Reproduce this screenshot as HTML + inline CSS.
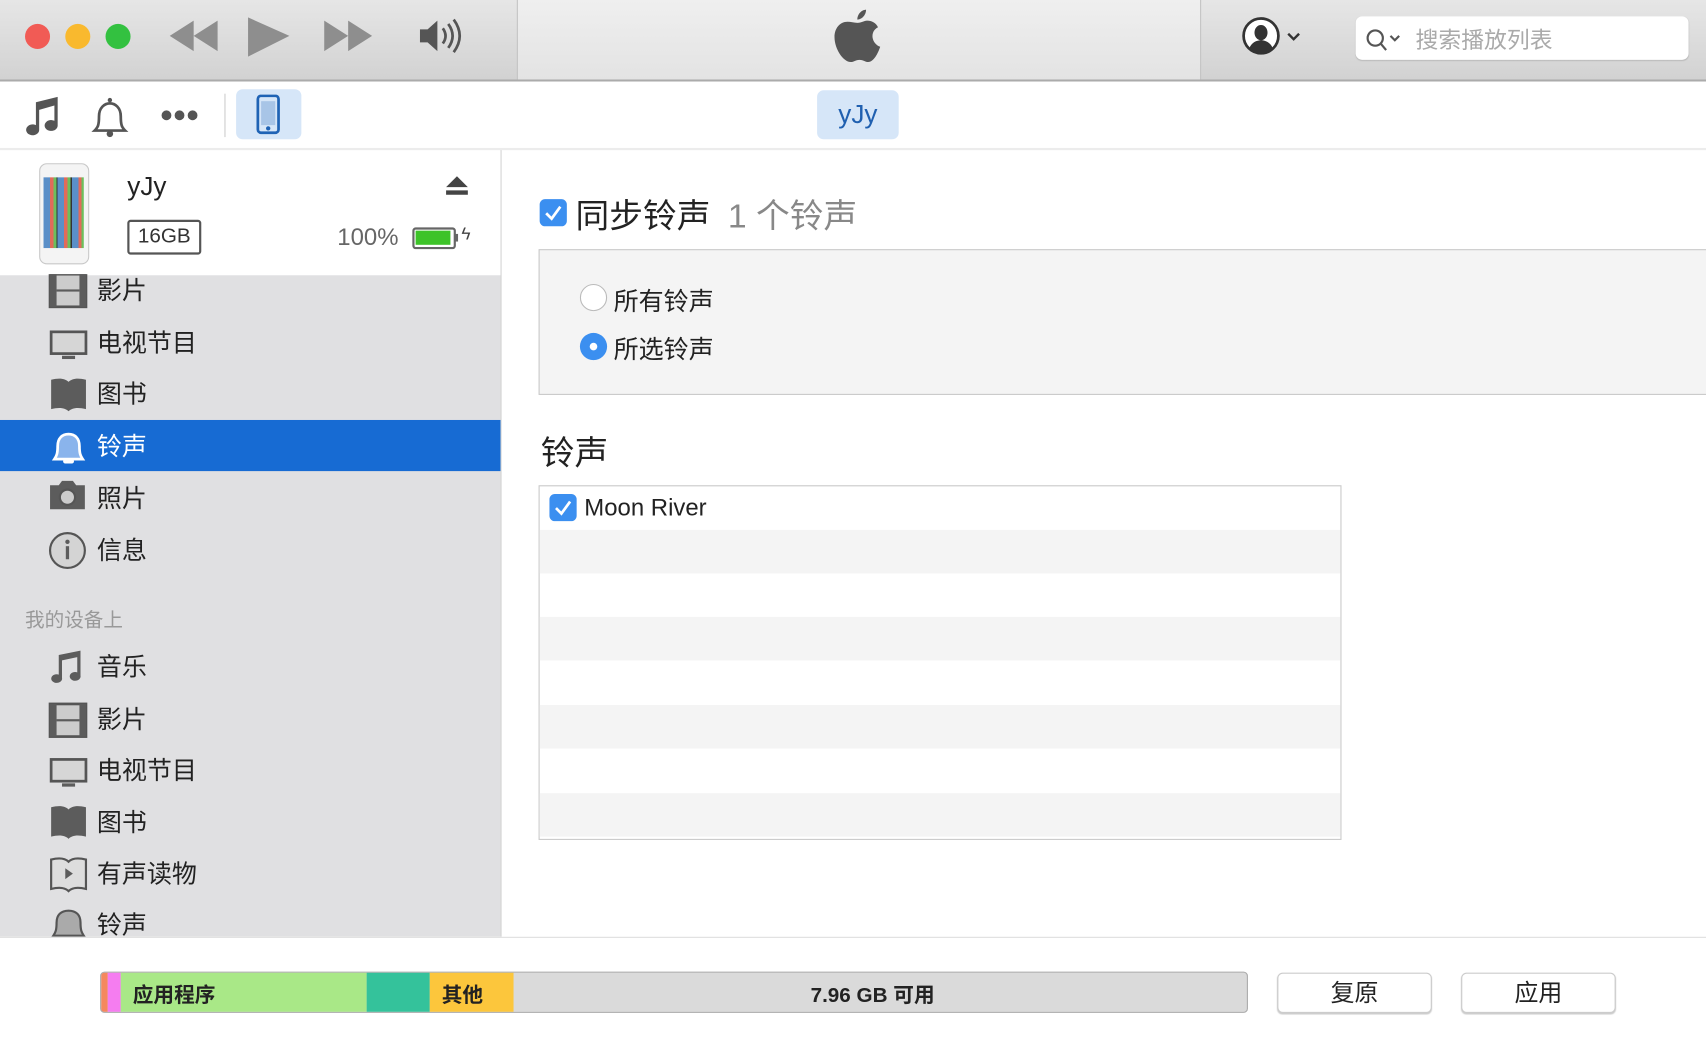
<!DOCTYPE html>
<html><head><meta charset="utf-8"><style>
html,body{margin:0;padding:0;width:1706px;height:1042px;overflow:hidden;background:#fff}
#w{position:absolute;left:0;top:0;width:1568px;height:958px;transform:scale(1.08801);transform-origin:0 0;font-family:"Liberation Sans","Noto Sans CJK SC",sans-serif;color:#222}
.a{position:absolute}
.si{position:absolute;left:89px;font-size:23px;color:#222;line-height:24px}
.row{position:absolute;left:496px;width:736px;height:40px}
</style></head><body><div id="w">
<!-- title bar -->
<div class="a" style="left:0;top:0;width:1568px;height:73px;background:linear-gradient(#e6e6e6,#d2d2d2);border-bottom:2px solid #ababab"></div>
<div class="a" style="left:475px;top:0;width:627px;height:73px;background:linear-gradient(#efefef,#e3e3e3);border-left:1px solid #c4c4c4;border-right:1px solid #c4c4c4"></div>
<div class="a" style="left:23px;top:22px;width:23px;height:23px;border-radius:50%;background:#f15b55"></div>
<div class="a" style="left:60px;top:22px;width:23px;height:23px;border-radius:50%;background:#f9b92e"></div>
<div class="a" style="left:97px;top:22px;width:23px;height:23px;border-radius:50%;background:#33c140"></div>
<svg class="a" style="left:150px;top:14px" width="290" height="44"><g fill="#8e8e8e">
<path d="M6 19 L28 5 V33Z M28 19 L50 5 V33Z"/><path d="M78 2 L116 19 L78 38Z"/><path d="M148 5 L170 19 L148 33Z M170 5 L192 19 L170 33Z"/></g>
<g fill="#555"><path d="M236 13h7l9-8v28l-9-8h-7z"/></g><g fill="none" stroke="#555" stroke-width="2.5"><path d="M257 12q5 7 0 14M262 8q8 11 0 22M267 4q11 15 0 30"/></g></svg>
<svg class="a" style="left:763px;top:6px" width="50" height="58"><path fill="#555" d="M33 3c0 5-4 9-8 9 0-5 4-9 8-9zM25 15c4 0 6-2 9-2 4 0 8 2 10 6-8 4-6 15 2 18-2 6-6 14-11 14-3 0-4-2-8-2s-5 2-8 2C12 51 4 39 4 28 4 20 9 14 16 14c3 0 6 1 9 1z"/></svg>
<svg class="a" style="left:1140px;top:14px" width="60" height="40"><circle cx="19" cy="19" r="16" fill="#fff" stroke="#333" stroke-width="2.5"/><path fill="#333" d="M19 9a6 7 0 1 1 0 14a6 7 0 1 1 0-14zM8 31c2-6 7-8 11-8s9 2 11 8a16 16 0 0 1-22 0z"/><path d="M44 17l5 5 5-5" fill="none" stroke="#333" stroke-width="2.2"/></svg>
<div class="a" style="left:1246px;top:15px;width:306px;height:40px;background:#fff;border-radius:6px;box-shadow:0 1px 1px #bbb"></div>
<svg class="a" style="left:1254px;top:24px" width="40" height="24"><circle cx="10" cy="11" r="7" fill="none" stroke="#555" stroke-width="2"/><path d="M15 16l5 6M24 9l4 4 4-4" stroke="#555" stroke-width="2" fill="none"/></svg>
<div class="a" style="left:1301px;top:21px;font-size:21px;color:#aaa">搜索播放列表</div>
<!-- toolbar -->
<div class="a" style="left:0;top:75px;width:1568px;height:61px;background:#fff;border-bottom:2px solid #ececec"></div>
<svg class="a" style="left:20px;top:86px" width="260" height="44"><path fill="#555" d="M13 8l20-5v26a6 5 0 1 1-3-4V11l-14 4v18a6 5 0 1 1-3-4z"/>
<path d="M67 34c3-3 4-5 4-13 0-8 5-12 10-12s10 4 10 12c0 8 1 10 4 13z" fill="#fff" stroke="#555" stroke-width="2.5"/><circle cx="81" cy="37" r="3" fill="#555"/><circle cx="81" cy="6" r="2" fill="#555"/>
<circle cx="133" cy="20" r="4.5" fill="#555"/><circle cx="145" cy="20" r="4.5" fill="#555"/><circle cx="157" cy="20" r="4.5" fill="#555"/>
<rect x="186" y="0" width="1.5" height="40" fill="#ddd"/></svg>
<div class="a" style="left:217px;top:82px;width:60px;height:46px;background:#d6e6f8;border-radius:6px"></div>
<svg class="a" style="left:235px;top:87px" width="24" height="38"><rect x="2" y="1" width="19" height="34" rx="3" fill="none" stroke="#1f63b5" stroke-width="2.5"/><rect x="5" y="6" width="13" height="22" fill="#1f63b5" opacity=".25"/><circle cx="11.5" cy="31" r="2" fill="#1f63b5"/></svg>
<div class="a" style="left:751px;top:83px;width:75px;height:45px;background:#d6e6f8;border-radius:6px;color:#2060b0;font-size:24px;text-align:center;line-height:45px">yJy</div>
<!-- sidebar -->
<div class="a" style="left:0;top:138px;width:460px;height:723px;background:#e0e0e2;border-right:1px solid #d4d4d4"></div>
<div class="a" style="left:0;top:138px;width:460px;height:115px;background:#fff"></div>
<div class="a" style="left:36px;top:150px;width:44px;height:91px;border:1px solid #c8c8c8;border-radius:7px;background:#f4f4f4"></div>
<div class="a" style="left:40px;top:163px;width:37px;height:65px;background:repeating-linear-gradient(90deg,#5a8fc8 0 6px,#e26a5a 6px 9px,#6cbf5d 9px 12px,#333 12px 13px)"></div>
<div class="a" style="left:117px;top:158px;font-size:24px">yJy</div>
<div class="a" style="left:117px;top:202px;width:64px;height:28px;border:2px solid #555;border-radius:3px;font-size:19px;text-align:center;line-height:28px;color:#333">16GB</div>
<svg class="a" style="left:409px;top:160px" width="24" height="22"><path d="M1 12L11 2l10 10z M1 15h20v4H1z" fill="#444"/></svg>
<div class="a" style="left:310px;top:205px;font-size:22px;color:#666">100%</div>
<div class="a" style="left:379px;top:209px;width:36px;height:16px;border:2px solid #666;border-radius:3px;background:#fff"><div style="margin:1px;width:32px;height:13px;background:#3dc328"></div></div>
<div class="a" style="left:418px;top:215px;width:3px;height:7px;background:#666"></div>
<div class="a" style="left:424px;top:207px;font-size:16px;color:#444">ϟ</div>

<div class="a" style="left:0;top:386px;width:460px;height:47px;background:#176bd3"></div>
<svg class="a" style="left:44px;top:252px" width="40" height="610" fill="#5c5c5c">
<g transform="translate(2,0)"><rect x="0" y="0" width="33" height="30" fill="#ccc" stroke="#555" stroke-width="2.5"/><path d="M0 0h6v30H0zM27 0h6v30h-6z"/><rect x="6" y="14" width="21" height="2"/></g>
<g transform="translate(2,52)"><rect x="1" y="1" width="32" height="20" fill="#d6d6d6" stroke="#555" stroke-width="2.5"/><rect x="11" y="23" width="12" height="3"/></g>
<path d="M3 97c8-2 13-1 16 2 3-3 8-4 16-2v27c-8-2-13-1-16 2-3-3-8-4-16-2z"/>
<path d="M6 170c2-3 3-5 3-12 0-7 4-11 10-11s10 4 10 11c0 7 1 9 3 12z" fill="#8ab4ec" stroke="#fff" stroke-width="2.5"/><rect x="14" y="170" width="10" height="4" rx="2" fill="#fff"/>
<path d="M2 194h8l3-4h10l3 4h8v22H2z"/><circle cx="18" cy="205" r="7" fill="#ccc" stroke="#555" stroke-width="2"/>
<circle cx="18" cy="254" r="16" fill="#d4d4d4" stroke="#555" stroke-width="2"/><rect x="16.5" y="250" width="3" height="12"/><circle cx="18" cy="246" r="2"/>
<path d="M10 350l20-4v23a5 4 0 1 1-3-3v-14l-14 3v16a5 4 0 1 1-3-3z"/>
<g transform="translate(2,395)"><rect x="0" y="0" width="33" height="30" fill="#ccc" stroke="#555" stroke-width="2.5"/><path d="M0 0h6v30H0zM27 0h6v30h-6z"/><rect x="6" y="14" width="21" height="2"/></g>
<g transform="translate(2,445)"><rect x="1" y="1" width="32" height="20" fill="#d6d6d6" stroke="#555" stroke-width="2.5"/><rect x="11" y="23" width="12" height="3"/></g>
<path d="M3 490c8-2 13-1 16 2 3-3 8-4 16-2v27c-8-2-13-1-16 2-3-3-8-4-16-2z"/>
<path d="M3 538c8-2 13-1 16 2 3-3 8-4 16-2v27c-8-2-13-1-16 2-3-3-8-4-16-2z" fill="#ddd" stroke="#555" stroke-width="2"/><path d="M16 546l7 5-7 5z"/>
<path d="M5 608c2-3 3-5 3-12 0-7 4-11 11-11s11 4 11 11c0 7 1 9 3 12z" fill="#aaa" stroke="#555" stroke-width="2"/>
</svg>
<div class="si" style="top:255px">影片</div>
<div class="si" style="top:303px">电视节目</div>
<div class="si" style="top:350px">图书</div>
<div class="si" style="top:398px;color:#fff">铃声</div>
<div class="si" style="top:446px">照片</div>
<div class="si" style="top:494px">信息</div>
<div class="a" style="left:23px;top:556px;font-size:18px;color:#999">我的设备上</div>
<div class="si" style="top:601px">音乐</div>
<div class="si" style="top:649px">影片</div>
<div class="si" style="top:696px">电视节目</div>
<div class="si" style="top:744px">图书</div>
<div class="si" style="top:791px">有声读物</div>
<div class="si" style="top:838px">铃声</div>
<!-- content -->
<div class="a" style="left:496px;top:183px;width:25px;height:25px;background:#3b8ff0;border-radius:5px"></div>
<svg class="a" style="left:496px;top:183px" width="25" height="25"><path d="M6 13l5 5 8-11" stroke="#fff" stroke-width="2.5" fill="none"/></svg>
<div class="a" style="left:529px;top:173px;font-size:31px;color:#222">同步铃声<span style="color:#888;margin-left:16px">1 个铃声</span></div>
<div class="a" style="left:495px;top:229px;width:1080px;height:132px;background:#f4f4f4;border:1px solid #c9c9c9"></div>
<div class="a" style="left:533px;top:261px;width:23px;height:23px;border:1px solid #bbb;border-radius:50%;background:#fff"></div>
<div class="a" style="left:533px;top:306px;width:25px;height:25px;border-radius:50%;background:#3b8ff0"><div style="margin:9px;width:7px;height:7px;border-radius:50%;background:#fff"></div></div>
<div class="a" style="left:564px;top:258px;font-size:23px">所有铃声</div>
<div class="a" style="left:564px;top:302px;font-size:23px">所选铃声</div>
<div class="a" style="left:497px;top:391px;font-size:31px">铃声</div>
<div class="a" style="left:495px;top:446px;width:736px;height:324px;border:1px solid #c9c9c9;background:#fff"></div>
<div class="row" style="top:487px;background:#f4f4f4"></div>
<div class="row" style="top:567px;background:#f4f4f4"></div>
<div class="row" style="top:648px;background:#f4f4f4"></div>
<div class="row" style="top:729px;background:#f4f4f4"></div>
<div class="a" style="left:505px;top:454px;width:25px;height:25px;background:#3b8ff0;border-radius:5px"></div>
<svg class="a" style="left:505px;top:454px" width="25" height="25"><path d="M6 13l5 5 8-11" stroke="#fff" stroke-width="2.5" fill="none"/></svg>
<div class="a" style="left:537px;top:454px;font-size:22px">Moon River</div>
<!-- bottom -->
<div class="a" style="left:0;top:861px;width:1568px;height:97px;background:#fff;border-top:1px solid #ddd"></div>
<div class="a" style="left:92px;top:893px;width:1053px;height:36px;border:1px solid #aaa;border-radius:4px;overflow:hidden;background:#dadada">
<div class="a" style="left:0;top:0;width:6px;height:36px;background:#f5885e"></div>
<div class="a" style="left:6px;top:0;width:12px;height:36px;background:#f57df0"></div>
<div class="a" style="left:18px;top:0;width:226px;height:36px;background:#a9e887"></div>
<div class="a" style="left:244px;top:0;width:58px;height:36px;background:#34c29b"></div>
<div class="a" style="left:302px;top:0;width:77px;height:36px;background:#fcc63c"></div>
<div class="a" style="left:29px;top:6px;font-size:19px;font-weight:bold;color:#222">应用程序</div>
<div class="a" style="left:313px;top:6px;font-size:19px;font-weight:bold;color:#222">其他</div>
<div class="a" style="left:652px;top:6px;font-size:19px;font-weight:bold;color:#222">7.96 GB 可用</div>
</div>
<div class="a" style="left:1174px;top:894px;width:140px;height:35px;border:1px solid #ccc;border-radius:5px;background:#fff;font-size:22px;text-align:center;line-height:35px;box-shadow:0 1px 1px #ccc">复原</div>
<div class="a" style="left:1343px;top:894px;width:140px;height:35px;border:1px solid #ccc;border-radius:5px;background:#fff;font-size:22px;text-align:center;line-height:35px;box-shadow:0 1px 1px #ccc">应用</div>
</div></body></html>
